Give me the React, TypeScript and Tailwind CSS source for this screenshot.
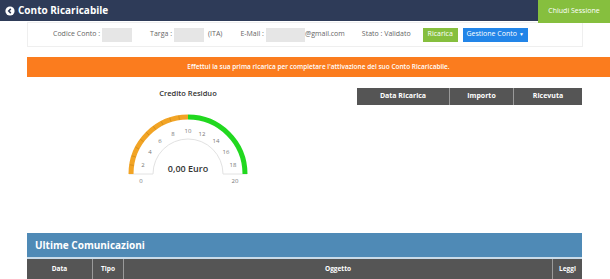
// Conto Ricaricabile – pannello utente con credito residuo e comunicazioni

const gaugeLabels: [string, number, number][] = [
  ["0", 23, 76],
  ["2", 25, 60],
  ["4", 32, 47],
  ["6", 42, 36],
  ["8", 55, 29],
  ["10", 70, 26],
  ["12", 84, 29],
  ["14", 98, 36],
  ["16", 108, 47],
  ["18", 115, 60],
  ["20", 117, 76],
];

function Gauge() {
  const cx = 70;
  const cy = 69;
  const ticks = [1, 2, 3, 4, 5, 6, 7, 8, 9].map((v) => {
    const a = Math.PI - (v / 20) * Math.PI;
    return {
      x1: cx + 55 * Math.cos(a),
      y1: cy - 55 * Math.sin(a),
      x2: cx + 59 * Math.cos(a),
      y2: cy - 59 * Math.sin(a),
    };
  });
  return (
    <svg width="140" height="85" viewBox="0 0 140 85" className="block">
      <path d="M35 69 A35 35 0 0 1 105 69" fill="none" stroke="#e2e2e2" strokeWidth="1" />
      <path d="M11 69 H35 M105 69 H129" stroke="#e2e2e2" strokeWidth="1" />
      <path d="M13 69 A57 57 0 0 1 70 12" fill="none" stroke="#f2a425" strokeWidth="5" />
      <path d="M70 12 A57 57 0 0 1 127 69" fill="none" stroke="#21d81f" strokeWidth="5" />
      {ticks.map((t, i) => (
        <line key={i} x1={t.x1} y1={t.y1} x2={t.x2} y2={t.y2} stroke="#c98618" strokeWidth="0.7" />
      ))}
      {gaugeLabels.map(([l, x, y]) => (
        <text
          key={l}
          x={x}
          y={y}
          textAnchor="middle"
          dominantBaseline="middle"
          fontSize="6"
          fill="#777"
          fontFamily="'Open Sans', sans-serif"
        >
          {l}
        </text>
      ))}
      <text
        x="70"
        y="65"
        textAnchor="middle"
        dominantBaseline="middle"
        fontSize="9"
        fill="#333"
        fontWeight="600"
        fontFamily="'Open Sans', sans-serif"
      >
        0,00 Euro
      </text>
    </svg>
  );
}

export default function App() {
  return (
    <div className="h-[279px] w-[610px] overflow-hidden bg-white font-['Open_Sans',sans-serif]">
      {/* barra superiore */}
      <header className="flex h-[21px] items-start justify-between bg-[#2e3b58]">
        <div className="flex h-[21px] items-center pl-[5px]">
          <svg width="10" height="10" viewBox="0 0 10 10">
            <circle cx="5" cy="5" r="4.6" fill="#fff" />
            <path d="M5.8 2.9 L3.7 5 L5.8 7.1" fill="none" stroke="#2e3b58" strokeWidth="1.5" />
          </svg>
          <span className="ml-[3px] text-[10px] font-bold text-white">Conto Ricaricabile</span>
        </div>
        <button className="relative z-10 flex h-[23px] w-[72px] items-center justify-center bg-[#86bf3e] text-[7px] text-white">
          Chiudi Sessione
        </button>
      </header>

      {/* dati del conto */}
      <div className="ml-[27px] mt-[1px] flex h-[25px] w-[556px] items-center border border-[#efefef] pl-[25px] text-[7px] text-[#666]">
        <span>Codice Conto :</span>
        <span className="ml-[2px] h-[14px] w-[30px] bg-[#e6e6e6]" />
        <span className="ml-[18px]">Targa :</span>
        <span className="ml-[2px] h-[14px] w-[30px] bg-[#e6e6e6]" />
        <span className="ml-[4px]">(ITA)</span>
        <span className="ml-[18px]">E-Mail :</span>
        <span className="ml-[2px] h-[14px] w-[39px] bg-[#e6e6e6]" />
        <span>@gmail.com</span>
        <span className="ml-[17px]">Stato : Validato</span>
        <span className="ml-[12px] flex h-[14px] w-[35px] items-center justify-center bg-[#86bf3e] text-white">
          Ricarica
        </span>
        <span className="ml-[5px] flex h-[14px] w-[65px] items-center justify-center gap-[2px] bg-[#2285e8] text-white">
          Gestione Conto
          <span className="text-[5px]">▼</span>
        </span>
      </div>

      {/* avviso */}
      <div className="ml-[27px] mt-[10px] flex h-[20px] items-center justify-center bg-[#fb7c1e] text-[6.5px] font-semibold text-white">
        Effettui la sua prima ricarica per completare l'attivazione del suo Conto Ricaricabile.
      </div>

      {/* credito e ricariche */}
      <div className="ml-[27px] flex h-[156px]">
        <div className="flex w-[322px] flex-col items-center">
          <div className="mt-[11px] text-[7.5px] font-semibold text-[#333]">Credito Residuo</div>
          <div className="mt-[6px]">
            <Gauge />
          </div>
        </div>
        <div className="ml-[8px] mt-[11px] flex h-[17px] w-[225px] bg-[#555] text-[7px] font-bold text-white">
          <div className="flex w-[93px] items-center justify-center border-r border-[#9a9a9a]">Data Ricarica</div>
          <div className="flex w-[64px] items-center justify-center border-r border-[#9a9a9a]">Importo</div>
          <div className="flex flex-1 items-center justify-center">Ricevuta</div>
        </div>
      </div>

      {/* ultime comunicazioni */}
      <div className="ml-[27px] w-[555px]">
        <div className="flex h-[24px] items-center bg-[#4f8ab6] pl-[8px] text-[10px] font-bold text-white">
          Ultime Comunicazioni
        </div>
        <div className="h-[2px] bg-[#c9dbe9]" />
        <div className="flex h-[20px] bg-[#555] text-[6.5px] font-bold text-white">
          <div className="flex w-[66px] items-center justify-center border-r border-[#9a9a9a]">Data</div>
          <div className="flex w-[31px] items-center justify-center border-r border-[#9a9a9a]">Tipo</div>
          <div className="flex flex-1 items-center justify-center border-r border-[#9a9a9a]">Oggetto</div>
          <div className="flex w-[29px] items-center justify-center">Leggi</div>
        </div>
      </div>
    </div>
  );
}
